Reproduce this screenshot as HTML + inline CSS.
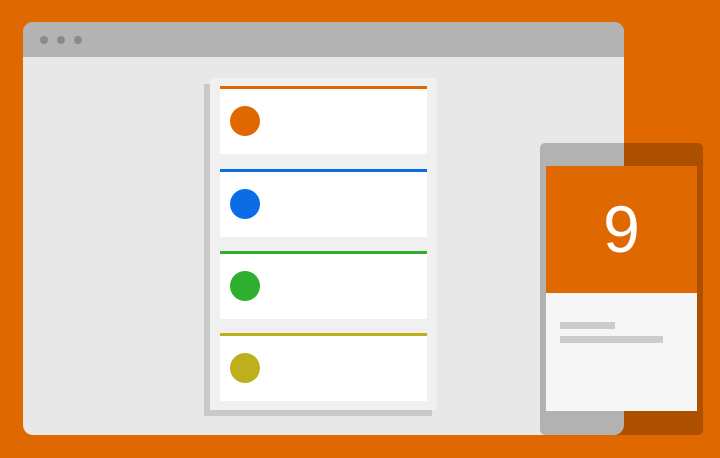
<!DOCTYPE html>
<html><head><style>
body{margin:0;width:720px;height:458px;background:#e06800;position:relative;overflow:hidden;font-family:"Liberation Sans",sans-serif}
div{position:absolute}
.win{left:23px;top:22px;width:601px;height:413px;background:#e8e8e8;border-radius:10px;overflow:hidden}
.bar{left:0;top:0;width:601px;height:35px;background:#b3b3b3}
.dot{width:8px;height:8px;border-radius:50%;background:#8a8a8a;top:14px}
.card{left:220px;width:207px;height:68px;background:#fff}
.card i{position:absolute;left:0;top:0;width:207px;height:3px}
.card b{position:absolute;left:10px;top:20px;width:30px;height:30px;border-radius:50%}
</style></head><body>
<div class="win"><div class="bar"></div>
<div class="dot" style="left:17px"></div><div class="dot" style="left:34px"></div><div class="dot" style="left:51px"></div></div>
<div style="left:204px;top:84px;width:228px;height:332px;background:#c9c9c9"></div>
<div style="left:210px;top:78px;width:227px;height:332px;background:#f0f0f0"></div>
<div class="card" style="top:86px"><i style="background:#e06800"></i><b style="background:#e06800"></b></div>
<div class="card" style="top:169px"><i style="background:#0a6de6"></i><b style="background:#0a6de6"></b></div>
<div class="card" style="top:251px"><i style="background:#2fae2f"></i><b style="background:#2fae2f"></b></div>
<div class="card" style="top:333px"><i style="background:#bdb01a"></i><b style="background:#bdb01a"></b></div>
<div style="left:540px;top:143px;width:163px;height:292px;border-radius:5px;background:rgba(0,0,0,0.23)"></div>
<div style="left:546px;top:166px;width:151px;height:245px;background:#f6f6f6"></div>
<div style="left:546px;top:166px;width:151px;height:127px;background:#e06800;color:#fff;font-size:66px;text-align:center;line-height:127px">9</div>
<div style="left:560px;top:322px;width:55px;height:7px;background:#ccc"></div>
<div style="left:560px;top:336px;width:103px;height:7px;background:#ccc"></div>
</body></html>
